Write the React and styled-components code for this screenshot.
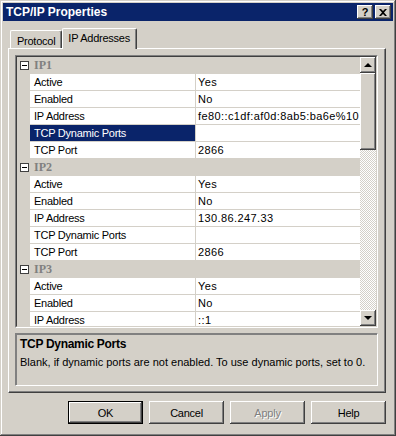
import React from "react";
import styled, { createGlobalStyle } from "styled-components";

const GlobalStyle = createGlobalStyle`
  html, body {
    margin: 0;
    padding: 0;
    background: #d4d0c8;
  }
  body {
    font-family: "Liberation Sans", Arial, sans-serif;
    font-size: 11px;
    letter-spacing: -0.25px;
    color: #000;
  }
`;

const raised = `
  box-shadow: inset -1px -1px #404040, inset 1px 1px #fff,
    inset -2px -2px #808080, inset 2px 2px #d4d0c8;
`;

const Window = styled.div`
  box-sizing: border-box;
  width: 396px;
  height: 436px;
  padding: 3px;
  background: #d4d0c8;
  display: flex;
  flex-direction: column;
  box-shadow: inset -1px -1px #404040, inset 1px 1px #d4d0c8,
    inset -2px -2px #808080, inset 2px 2px #fff;
`;

const TitleBar = styled.div`
  height: 18px;
  flex: none;
  background: #0a246a;
  display: flex;
  align-items: center;
  padding: 0 2px 0 3px;
`;

const Title = styled.div`
  flex: 1;
  color: #fff;
  font-weight: bold;
  font-size: 12px;
  letter-spacing: 0;
`;

const CaptionButton = styled.div`
  width: 16px;
  height: 14px;
  margin-left: ${(p) => (p.$gap ? "2px" : "0")};
  background: #d4d0c8;
  display: flex;
  align-items: center;
  justify-content: center;
  font-weight: bold;
  font-size: 11px;
  line-height: 14px;
  ${raised}
`;

const Body = styled.div`
  display: flex;
  flex-direction: column;
  padding: 7px 7px 0 5px;
`;

const TabStrip = styled.div`
  display: flex;
  align-items: flex-end;
  height: 20px;
  padding-left: 2px;
  position: relative;
  z-index: 1;
`;

const Tab = styled.div`
  box-sizing: border-box;
  height: ${(p) => (p.$active ? "21px" : "18px")};
  margin-bottom: ${(p) => (p.$active ? "-1px" : "0")};
  padding: ${(p) => (p.$active ? "2px 6px 0 5px" : "3px 6px 0 6px")};
  background: #d4d0c8;
  border-top: 1px solid #fff;
  border-left: 1px solid #fff;
  border-right: 1px solid #404040;
  border-top-left-radius: 2px;
  border-top-right-radius: 2px;
  box-shadow: inset -1px 0 #808080;
  line-height: 14px;
`;

const Panel = styled.div`
  box-sizing: border-box;
  height: 345px;
  border: 1px solid;
  border-color: #fff #404040 #404040 #fff;
  box-shadow: inset -1px -1px #808080;
  padding: 6px 7px 6px 6px;
  display: flex;
  flex-direction: column;
  gap: 5px;
`;

const GridFrame = styled.div`
  height: 273px;
  flex: none;
  box-sizing: border-box;
  border: 1px solid;
  border-color: #808080 #fff #fff #808080;
`;

const GridInner = styled.div`
  height: 100%;
  box-sizing: border-box;
  border: 1px solid;
  border-color: #404040 #d4d0c8 #d4d0c8 #404040;
  display: flex;
  background: #fff;
`;

const Rows = styled.div`
  flex: 1;
  overflow: hidden;
`;

const Row = styled.div`
  display: flex;
  height: 17px;
`;

const Gutter = styled.div`
  width: 13px;
  flex: none;
  background: #d4d0c8;
  display: flex;
  align-items: center;
  justify-content: center;
`;

const Toggle = styled.div`
  box-sizing: border-box;
  width: 9px;
  height: 9px;
  border: 1px solid #404040;
  background: #fff;
  display: flex;
  align-items: center;
  justify-content: center;
  margin-left: 1px;
  &::after {
    content: "";
    width: 5px;
    height: 1px;
    background: #000;
  }
`;

const GroupCell = styled.div`
  flex: 1;
  background: #d4d0c8;
  padding-left: 4px;
  font-family: "Liberation Serif", "Times New Roman", serif;
  font-weight: bold;
  font-size: 12px;
  letter-spacing: 0;
  color: #808080;
  line-height: 17px;
`;

const NameCell = styled.div`
  width: 161px;
  flex: none;
  padding-left: 4px;
  border-right: 1px solid #d4d0c8;
  border-bottom: 1px solid #d4d0c8;
  line-height: 16px;
  white-space: nowrap;
  background: ${(p) => (p.$selected ? "#0a246a" : "#fff")};
  color: ${(p) => (p.$selected ? "#fff" : "#000")};
`;

const ValueCell = styled.div`
  flex: 1;
  padding-left: 2px;
  border-bottom: 1px solid #d4d0c8;
  line-height: 16px;
  letter-spacing: 0.4px;
  white-space: nowrap;
  overflow: hidden;
`;

const ScrollBar = styled.div`
  width: 16px;
  flex: none;
  display: flex;
  flex-direction: column;
`;

const ScrollButton = styled.div`
  height: 16px;
  flex: none;
  background: #d4d0c8;
  display: flex;
  align-items: center;
  justify-content: center;
  ${raised}
`;

const Thumb = styled.div`
  height: 77px;
  flex: none;
  background: #d4d0c8;
  ${raised}
`;

const Track = styled.div`
  flex: 1;
  background-color: #d4d0c8;
  background-image: repeating-conic-gradient(#fff 0 25%, #d4d0c8 0 50%);
  background-size: 2px 2px;
`;

const Arrow = styled.div`
  width: 0;
  height: 0;
  border-left: 4px solid transparent;
  border-right: 4px solid transparent;
  ${(p) =>
    p.$down ? "border-top: 4px solid #000;" : "border-bottom: 4px solid #000;"}
`;

const Description = styled.div`
  box-sizing: border-box;
  height: 53px;
  flex: none;
  border: 1px solid;
  border-color: #808080 #fff #fff #808080;
  box-shadow: 1px 1px 0 #808080 inset;
  padding: 2px 4px 0 4px;
`;

const DescTitle = styled.div`
  font-weight: bold;
  font-size: 12px;
  letter-spacing: -0.3px;
  line-height: 16px;
`;

const DescText = styled.div`
  margin-top: 2px;
  line-height: 16px;
  letter-spacing: 0;
  white-space: nowrap;
`;

const ButtonRow = styled.div`
  display: flex;
  justify-content: flex-end;
  gap: 6px;
  margin-top: 8px;
`;

const Button = styled.div`
  box-sizing: border-box;
  width: 75px;
  height: 23px;
  display: flex;
  align-items: center;
  justify-content: center;
  background: #d4d0c8;
  color: ${(p) => (p.$disabled ? "#808080" : "#000")};
  text-shadow: ${(p) => (p.$disabled ? "1px 1px #fff" : "none")};
  border: ${(p) => (p.$default ? "1px solid #000" : "none")};
  ${raised}
`;

const groups = [
  {
    name: "IP1",
    rows: [
      ["Active", "Yes"],
      ["Enabled", "No"],
      ["IP Address", "fe80::c1df:af0d:8ab5:ba6e%10"],
      ["TCP Dynamic Ports", ""],
      ["TCP Port", "2866"],
    ],
  },
  {
    name: "IP2",
    rows: [
      ["Active", "Yes"],
      ["Enabled", "No"],
      ["IP Address", "130.86.247.33"],
      ["TCP Dynamic Ports", ""],
      ["TCP Port", "2866"],
    ],
  },
  {
    name: "IP3",
    rows: [
      ["Active", "Yes"],
      ["Enabled", "No"],
      ["IP Address", "::1"],
      ["TCP Dynamic Ports", ""],
      ["TCP Port", "2866"],
    ],
  },
];

// flatten groups into grid lines, keep only what fits in the view
const VISIBLE_LINES = 16;
const lines = groups
  .flatMap((g, gi) => [
    { type: "group", key: g.name, name: g.name },
    ...g.rows.map(([name, value], ri) => ({
      type: "prop",
      key: g.name + name,
      name,
      value,
      selected: gi === 0 && ri === 3,
    })),
  ])
  .slice(0, VISIBLE_LINES);

export default function App() {
  return (
    <>
      <GlobalStyle />
      <Window>
        <TitleBar>
          <Title>TCP/IP Properties</Title>
          <CaptionButton>?</CaptionButton>
          <CaptionButton $gap>
            <svg width="8" height="7" viewBox="0 0 8 7">
              <path
                d="M0 0h2l2 2 2-2h2L5 3.5 8 7H6L4 5 2 7H0l3-3.5z"
                fill="#000"
              />
            </svg>
          </CaptionButton>
        </TitleBar>
        <Body>
          <TabStrip>
            <Tab>Protocol</Tab>
            <Tab $active>IP Addresses</Tab>
          </TabStrip>
          <Panel>
            <GridFrame>
              <GridInner>
                <Rows>
                  {lines.map((l) =>
                    l.type === "group" ? (
                      <Row key={l.key}>
                        <Gutter>
                          <Toggle />
                        </Gutter>
                        <GroupCell>{l.name}</GroupCell>
                      </Row>
                    ) : (
                      <Row key={l.key}>
                        <Gutter />
                        <NameCell $selected={l.selected}>{l.name}</NameCell>
                        <ValueCell>{l.value}</ValueCell>
                      </Row>
                    )
                  )}
                </Rows>
                <ScrollBar>
                  <ScrollButton>
                    <Arrow />
                  </ScrollButton>
                  <Thumb />
                  <Track />
                  <ScrollButton>
                    <Arrow $down />
                  </ScrollButton>
                </ScrollBar>
              </GridInner>
            </GridFrame>
            <Description>
              <DescTitle>TCP Dynamic Ports</DescTitle>
              <DescText>
                Blank, if dynamic ports are not enabled. To use dynamic ports,
                set to 0.
              </DescText>
            </Description>
          </Panel>
          <ButtonRow>
            <Button $default>OK</Button>
            <Button>Cancel</Button>
            <Button $disabled>Apply</Button>
            <Button>Help</Button>
          </ButtonRow>
        </Body>
      </Window>
    </>
  );
}
